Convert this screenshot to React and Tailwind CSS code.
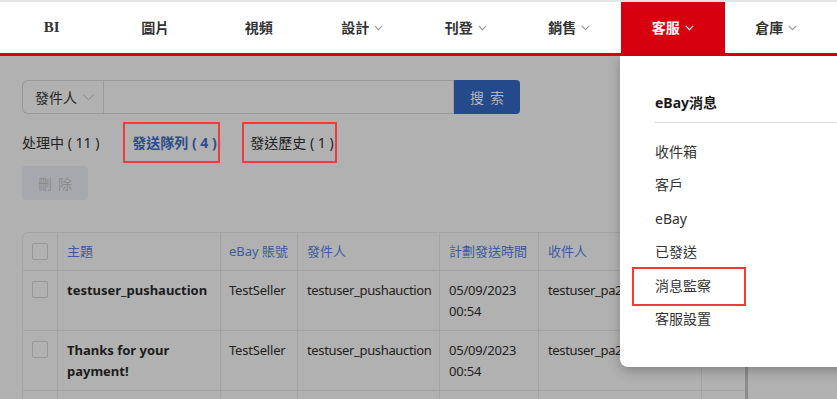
import React from "react";

const FONT = { fontFamily: '"Noto Sans", "Noto Sans CJK TC", sans-serif' };

function Chevron({ className }) {
  return (
    <svg width="9" height="6" viewBox="0 0 9 6" className={className} fill="none">
      <path d="M0.8 0.9 L4.5 4.6 L8.2 0.9" stroke="currentColor" strokeWidth="1.1" />
    </svg>
  );
}

const NAV = [
  { t: "BI", serif: true },
  { t: "圖片" },
  { t: "視頻" },
  { t: "設計", c: true },
  { t: "刊登", c: true },
  { t: "銷售", c: true },
  { t: "客服", c: true, active: true },
  { t: "倉庫", c: true },
];

function Checkbox() {
  return <div className="w-[16px] h-[17px] rounded-[2px] border border-[#979797] bg-[#b1b1b1]" />;
}

function Row({ subject, empty }) {
  return (
    <div className="flex h-[60px] border-t border-[#a4a4a4]">
      <div className="w-[34px] shrink-0 flex justify-center pt-[10px]">{!empty && <Checkbox />}</div>
      <div className="w-[163px] shrink-0 border-l border-[#a4a4a4] pl-[9px] pr-[6px] pt-[9px] leading-[21px] font-bold text-[#1c1c1c]">{subject}</div>
      <div className="w-[77px] shrink-0 border-l border-[#a4a4a4] pl-[8px] pt-[9px] leading-[21px] tracking-[-0.2px]">{!empty && "TestSeller"}</div>
      <div className="w-[142px] shrink-0 border-l border-[#a4a4a4] pl-[9px] pt-[9px] leading-[21px] whitespace-nowrap tracking-[-0.35px]">{!empty && "testuser_pushauction"}</div>
      <div className="w-[99px] shrink-0 border-l border-[#a4a4a4] pl-[9px] pt-[9px] leading-[21px] tracking-[-0.2px]">{!empty && <>05/09/2023<br />00:54</>}</div>
      <div className="w-[163px] shrink-0 border-l border-[#a4a4a4] pl-[9px] pt-[9px] leading-[21px] whitespace-nowrap overflow-hidden tracking-[-0.35px]">{!empty && "testuser_pa2"}</div>
      <div className="w-[45px] shrink-0 border-l border-[#a4a4a4]" />
    </div>
  );
}

export default function App() {
  return (
    <div className="w-[837px] h-[399px] overflow-hidden relative flex flex-col bg-[#b1b1b1]" style={FONT}>
      {/* header */}
      <div className="bg-white border-t-2 border-[#e4e4e4] shrink-0">
        <div className="flex h-[51px]">
          {NAV.map((n) => (
            <div
              key={n.t}
              className={
                "w-[103.5px] shrink-0 flex items-center justify-center gap-[5px] text-[14px] font-bold " +
                (n.active ? "bg-[#d7000f] text-white" : "text-[#333]")
              }
            >
              <span className={n.serif ? "text-[15px]" : ""} style={n.serif ? { fontFamily: '"Liberation Serif", serif' } : undefined}>{n.t}</span>
              {n.c && <Chevron className={n.active ? "text-white mt-[1px]" : "text-[#9a9a9a] mt-[1px]"} />}
            </div>
          ))}
        </div>
        <div className="h-[3px] bg-[#d7000f]" />
      </div>

      {/* body (dimmed under mask) */}
      <div className="flex-1 px-[22px] pt-[24px] text-[#222]">
        {/* search */}
        <div className="flex h-[34px] w-[498px]">
          <div className="w-[81px] flex items-center gap-[6px] pl-[12px] border border-r-0 border-[#9a9a9a] rounded-l-[6px] text-[14px] text-[#262626]">
            發件人
            <svg width="11" height="7" viewBox="0 0 11 7" fill="none" className="text-[#8a8a8a]">
              <path d="M0.6 0.8 L5.5 5.8 L10.4 0.8" stroke="currentColor" strokeWidth="1" />
            </svg>
          </div>
          <div className="flex-1 border border-[#9a9a9a]" />
          <div className="w-[66px] bg-[#254a8c] rounded-r-[4px] flex items-center justify-center text-[14px] text-[#b4b4b4] tracking-[6px] pl-[6px]">
            搜索
          </div>
        </div>

        {/* tabs */}
        <div className="flex items-center h-[41px] mt-[8px] text-[14px]">
          <span className="text-[#222] whitespace-pre">处理中 ( 11 )</span>
          <div className="ml-[24px] h-[41px] w-[97px] border-2 border-[#f23a3a] flex items-center pl-[7px] font-bold text-[#2c4c93] whitespace-pre">
            發送隊列 ( 4 )
          </div>
          <div className="ml-[22px] h-[41px] w-[95px] border-2 border-[#f23a3a] flex items-center pl-[6px] text-[#222] whitespace-pre">
            發送歷史 ( 1 )
          </div>
        </div>

        {/* delete button */}
        <div className="mt-[3px] w-[66px] h-[34px] rounded-[4px] bg-[#a7a8ad] flex items-center justify-center text-[14px] text-[#8b8b8b] tracking-[6px] pl-[6px]">
          刪除
        </div>

        {/* table */}
        <div className="mt-[32px] w-[726px] rounded-t-[6px] border border-[#a4a4a4] border-r-[3px] border-r-[#8c8c8c] text-[13px]">
          <div className="flex h-[37px] items-center text-[#3d5ba0]">
            <div className="w-[34px] shrink-0 h-full flex items-center justify-center"><Checkbox /></div>
            <div className="w-[163px] shrink-0 h-full border-l border-[#a4a4a4] pl-[9px] flex items-center">主題</div>
            <div className="w-[77px] shrink-0 h-full border-l border-[#a4a4a4] pl-[8px] flex items-center whitespace-nowrap">eBay 賬號</div>
            <div className="w-[142px] shrink-0 h-full border-l border-[#a4a4a4] pl-[9px] flex items-center">發件人</div>
            <div className="w-[99px] shrink-0 h-full border-l border-[#a4a4a4] pl-[9px] flex items-center whitespace-nowrap">計劃發送時間</div>
            <div className="w-[163px] shrink-0 h-full border-l border-[#a4a4a4] pl-[9px] flex items-center">收件人</div>
            <div className="w-[45px] shrink-0 h-full border-l border-[#a4a4a4]" />
          </div>
          <Row subject="testuser_pushauction" />
          <Row subject={<>Thanks for your<br />payment!</>} />
          <Row subject="" empty />
        </div>
      </div>

      {/* dropdown menu */}
      <div className="absolute left-[620px] top-[56px] w-[240px] h-[311px] bg-white rounded-bl-[8px] shadow-[0_4px_12px_rgba(0,0,0,0.25)] pl-[35px]">
        <div className="pt-[37px] leading-[20px] text-[14px] font-bold text-[#1a1a1a]">eBay消息</div>
        <div className="mt-[9px] border-t border-[#dcdcdc]" />
        <div className="mt-[11.5px] text-[14px] text-[#333]">
          {["收件箱", "客戶", "eBay", "已發送", "消息監察", "客服設置"].map((t) => (
            <div key={t} className="h-[33.5px] flex items-center relative">
              {t}
              {t === "消息監察" && (
                <span className="absolute left-[-23px] top-[-2px] w-[114px] h-[39px] border-2 border-[#f23a3a]" />
              )}
            </div>
          ))}
        </div>
      </div>
    </div>
  );
}
